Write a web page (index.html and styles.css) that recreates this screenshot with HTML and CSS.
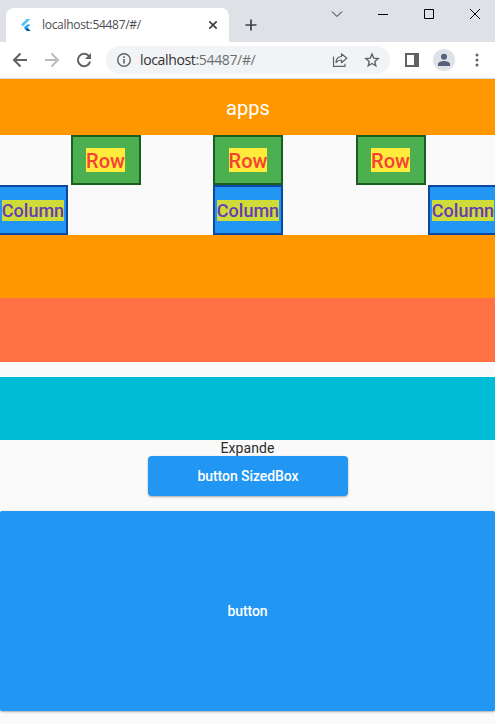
FILE: index.html
```html
<!DOCTYPE html>
<html lang="en">
<head>
<meta charset="utf-8">
<title>apps</title>
<link rel="stylesheet" href="styles.css">
</head>
<body>
<div class="window">
  <header class="tabstrip">
    <div class="tab">
      <svg class="favicon" width="12" height="14" viewBox="0 0 12 14"><path d="M6.500 1h4L3 8.500 1 6.500z" fill="#54c5f8"/><path d="M7 6.500h3.500L7.300 9.700 10.500 13H7L3.700 9.700z" fill="#29a9f0"/><path d="M5.500 11.500l2-1.800L10.500 13H7z" fill="#01579b"/></svg>
      <span class="tab-title">localhost:54487/#/</span>
      <svg class="tab-close" width="10" height="10" viewBox="0 0 10 10"><path d="M1.300 1.300l7.400 7.400M8.700 1.300L1.300 8.700" stroke="#3c4043" stroke-width="1.700"/></svg>
    </div>
    <svg class="newtab" width="12" height="12" viewBox="0 0 12 12"><path d="M6 .5v11M.5 6h11" stroke="#3c4043" stroke-width="1.700"/></svg>
    <div class="controls">
      <svg width="12" height="12" viewBox="0 0 12 12"><path d="M1 3.500l5 5 5-5" fill="none" stroke="#222"/></svg>
      <svg width="12" height="12" viewBox="0 0 12 12"><path d="M1 6.500h10" stroke="#000"/></svg>
      <svg width="12" height="12" viewBox="0 0 12 12"><path d="M1.500 1.500h9v9h-9z" fill="none" stroke="#000"/></svg>
      <svg width="12" height="12" viewBox="0 0 12 12"><path d="M1 1l10 10M11 1L1 11" stroke="#000"/></svg>
    </div>
  </header>
  <nav class="toolbar">
    <svg class="nav-icon" width="16" height="16" viewBox="0 0 16 16"><path d="M15 8H2M8.500 1.500L2 8l6.500 6.500" fill="none" stroke="#5f6368" stroke-width="2"/></svg>
    <svg class="nav-icon" width="16" height="16" viewBox="0 0 16 16"><path d="M1 8h13M7.500 1.500L14 8l-6.500 6.500" fill="none" stroke="#babcbe" stroke-width="2"/></svg>
    <svg class="nav-icon" width="16" height="16" viewBox="0 0 16 16"><path d="M13 4.200A6.200 6.200 0 1 0 14.100 9.500" fill="none" stroke="#5f6368" stroke-width="2"/><path d="M15 1v6H9z" fill="#5f6368"/></svg>
    <div class="omnibox">
      <svg width="16" height="16" viewBox="0 0 16 16"><circle cx="8" cy="8" r="6.300" fill="none" stroke="#5f6368" stroke-width="1.400"/><path d="M8 7v4.500M8 4.300v1.600" stroke="#5f6368" stroke-width="1.600"/></svg>
      <span class="url"><b>localhost</b>:54487/#/</span>
      <svg class="share" width="16" height="16" viewBox="0 0 16 16"><path d="M1.500 4.500v9.800h11.500v-2.500" fill="none" stroke="#5f6368" stroke-width="1.200"/><path d="M4 10.500C4.300 6.500 6.300 4.700 9.500 4.500V1.800L14.800 6.300 9.500 10.700V8C7.300 8 5.500 8.700 4 10.500z" fill="none" stroke="#5f6368" stroke-width="1.200" stroke-linejoin="round"/></svg>
      <svg width="16" height="16" viewBox="0 0 16 16"><path d="M8 2l1.700 4.100 4.500.4-3.400 2.900 1 4.400L8 11.500l-3.800 2.300 1-4.400-3.400-2.900 4.500-.4z" fill="none" stroke="#5f6368" stroke-width="1.400"/></svg>
    </div>
    <svg class="panel" width="14" height="14" viewBox="0 0 14 14"><path d="M0 0h14v14H0zM2 2v10h7V2z" fill="#5f6368" fill-rule="evenodd"/></svg>
    <div class="avatar"><svg width="22" height="22" viewBox="0 0 22 22"><circle cx="11" cy="7.800" r="3" fill="#56617a"/><path d="M5 17v-1.600C5 12.800 8.500 12 11 12s6 .8 6 3.400V17z" fill="#56617a"/></svg></div>
    <svg class="more" width="4" height="14" viewBox="0 0 4 14"><g fill="#5f6368"><circle cx="2" cy="2" r="1.500"/><circle cx="2" cy="7" r="1.500"/><circle cx="2" cy="12" r="1.500"/></g></svg>
  </nav>
  <main class="app">
    <h1 class="appbar">apps</h1>
    <div class="boxes boxes-row">
      <div class="box green"><span>Row</span></div>
      <div class="box green"><span>Row</span></div>
      <div class="box green"><span>Row</span></div>
    </div>
    <div class="boxes boxes-column">
      <div class="box blue"><span>Column</span></div>
      <div class="box blue"><span>Column</span></div>
      <div class="box blue"><span>Column</span></div>
    </div>
    <div class="bar orange"></div>
    <div class="bar coral"></div>
    <div class="bar cyan"></div>
    <p class="label">Expande</p>
    <button class="btn small">button SizedBox</button>
    <button class="btn large">button</button>
  </main>
</div>
</body>
</html>
```

FILE: styles.css
```css
* { box-sizing: border-box; }
html, body { margin: 0; height: 100%; }
body { background: #fff; overflow: hidden; font-family: Roboto, sans-serif; }
svg { display: block; flex: none; }
.window { width: 495px; height: 724px; overflow: hidden; background: #fafafa; }

.tabstrip { display: flex; height: 42px; background: #dee1e6; }
.tab {
  display: flex; flex: none; align-items: center; width: 223px; height: 34px;
  margin: 8px 0 0 6px; padding: 0 0 0 14px;
  background: #fff; border-radius: 8px 8px 0 0;
}
.tab-title {
  width: 166px; margin-left: 10px; white-space: nowrap;
  font: 12px/16px "Open Sans", sans-serif; letter-spacing: -0.3px; color: #4a4d51;
}
.newtab { margin: 19px 0 0 16px; }
.controls { display: flex; gap: 34px; margin: 8px 0 0 74px; }

.toolbar {
  display: flex; align-items: center; height: 37px;
  padding-left: 12px; background: #fff; border-bottom: 1px solid #d9dbde;
}
.nav-icon { margin-right: 16px; }
.omnibox {
  display: flex; flex: none; align-items: center; width: 284px; height: 28px;
  margin-left: -2px; padding-left: 10px; background: #f1f3f4; border-radius: 14px;
}
.url {
  width: 192px; margin-left: 8px; white-space: nowrap;
  font: 14px/20px "Open Sans", sans-serif; letter-spacing: -0.35px; color: #6b6f74;
}
.url b { font-weight: 400; color: #303134; }
.share { margin-right: 16px; }
.panel { margin-left: 15px; }
.avatar { flex: none; margin-left: 14px; background: #dee1e6; border-radius: 50%; }
.more { margin-left: 20px; }

.app { display: flex; flex-direction: column; align-items: center; }
.appbar {
  width: 100%; height: 56px; margin: 0; padding-left: 1px; background: #ff9800; color: #fff;
  font-size: 20px; font-weight: 400; line-height: 59px; text-align: center; letter-spacing: 0.1px;
}
.boxes { display: flex; justify-content: space-between; height: 50px; flex: none; }
.boxes-row { width: 355px; margin-left: 1px; }
.boxes-column { width: 500px; margin-left: 1px; }
.box {
  display: flex; align-items: center; justify-content: center;
  width: 70px; height: 50px; border: 2px solid;
}
.green { background: #4caf50; border-color: #1b5e20; }
.green span { height: 23.500px; font-size: 20px; font-weight: 500; line-height: 26px; background: #ffeb3b; color: #f44336; }
.blue { background: #2196f3; border-color: #0d47a1; }
.blue span { font-size: 18px; font-weight: 500; line-height: 21px; background: #cddc39; color: #673ab7; }

.bar { width: 100%; height: 63.330px; }
.orange { background: #ff9800; }
.coral { background: #ff7043; }
.cyan { margin-top: 15px; background: #00bcd4; }

.label { margin: 0; height: 16px; font-size: 14px; line-height: 16px; color: #2c2c2c; letter-spacing: 0.05px; }
.btn {
  padding: 0; border: 0; border-radius: 4px; background: #2196f3; color: #fff;
  font: 500 14px/16px Roboto, sans-serif; letter-spacing: -0.08px;
  box-shadow: 0 1px 3px rgba(0, 0, 0, .2), 0 1px 1px rgba(0, 0, 0, .14);
}
.small { width: 200px; height: 40px; margin-left: 1px; }
.large { width: 100%; height: 200px; margin-top: 15px; border-radius: 2px; }
```
